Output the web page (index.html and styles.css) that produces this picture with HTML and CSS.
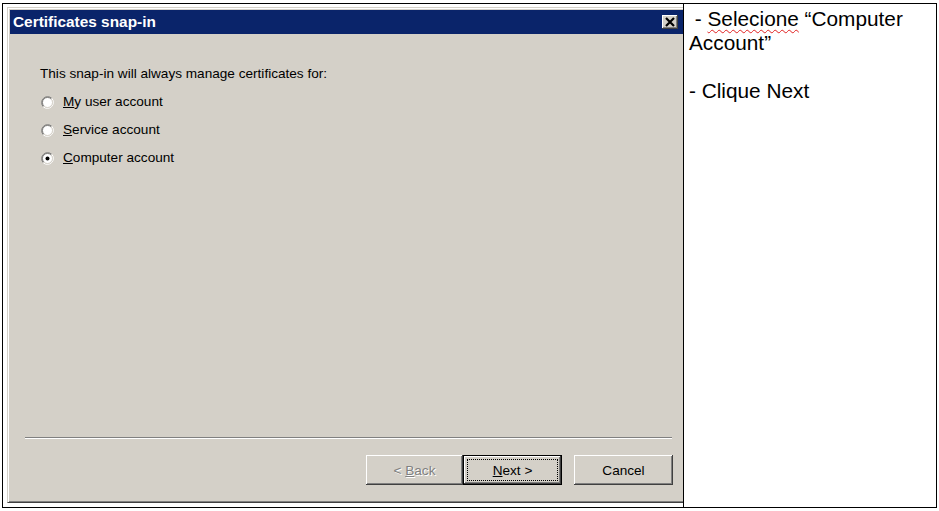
FILE: index.html
```html
<!DOCTYPE html>
<html lang="pt">
<head>
<meta charset="utf-8">
<title>Certificates snap-in</title>
<link rel="stylesheet" href="styles.css">
</head>
<body>
<div class="doc-table">
  <div class="cell cell-shot">
    <div class="dialog">
      <div class="titlebar">
        <span class="title">Certificates snap-in</span>
        <span class="close-btn">
          <svg width="16" height="14" viewBox="0 0 16 14"><path d="M4 3 L12 11 M12 3 L4 11" stroke="#000" stroke-width="2.2" fill="none"/></svg>
        </span>
      </div>
      <div class="body">
        <div class="prompt">This snap-in will always manage certificates for:</div>
        <div class="radio-row">
          <svg class="radio" width="13" height="13" viewBox="0 0 13 13"><circle cx="6.5" cy="6.5" r="5" fill="#fff"/><path d="M10.74 2.26 A6 6 0 0 0 2.26 10.74" stroke="#808080" fill="none"/><path d="M2.26 10.74 A6 6 0 0 0 10.74 2.26" stroke="#fff" fill="none"/><path d="M10.04 2.96 A5 5 0 0 0 2.96 10.04" stroke="#404040" fill="none" stroke-opacity=".55"/><path d="M2.96 10.04 A5 5 0 0 0 10.04 2.96" stroke="#d4d0c8" fill="none"/></svg>
          <span class="label"><u>M</u>y user account</span>
        </div>
        <div class="radio-row">
          <svg class="radio" width="13" height="13" viewBox="0 0 13 13"><circle cx="6.5" cy="6.5" r="5" fill="#fff"/><path d="M10.74 2.26 A6 6 0 0 0 2.26 10.74" stroke="#808080" fill="none"/><path d="M2.26 10.74 A6 6 0 0 0 10.74 2.26" stroke="#fff" fill="none"/><path d="M10.04 2.96 A5 5 0 0 0 2.96 10.04" stroke="#404040" fill="none" stroke-opacity=".55"/><path d="M2.96 10.04 A5 5 0 0 0 10.04 2.96" stroke="#d4d0c8" fill="none"/></svg>
          <span class="label"><u>S</u>ervice account</span>
        </div>
        <div class="radio-row">
          <svg class="radio" width="13" height="13" viewBox="0 0 13 13"><circle cx="6.5" cy="6.5" r="5" fill="#fff"/><path d="M10.74 2.26 A6 6 0 0 0 2.26 10.74" stroke="#808080" fill="none"/><path d="M2.26 10.74 A6 6 0 0 0 10.74 2.26" stroke="#fff" fill="none"/><path d="M10.04 2.96 A5 5 0 0 0 2.96 10.04" stroke="#404040" fill="none" stroke-opacity=".55"/><path d="M2.96 10.04 A5 5 0 0 0 10.04 2.96" stroke="#d4d0c8" fill="none"/><circle cx="6.5" cy="6.5" r="2" fill="#000"/></svg>
          <span class="label"><u>C</u>omputer account</span>
        </div>
      </div>
      <div class="separator"></div>
      <div class="buttons">
        <span class="btn btn-back"><span class="btn-text">&lt; <u>B</u>ack</span></span>
        <span class="btn btn-next"><span class="btn-text"><u>N</u>ext &gt;</span></span>
        <span class="btn btn-cancel"><span class="btn-text">Cancel</span></span>
      </div>
    </div>
  </div>
  <div class="cell cell-notes">
    <p class="note">&nbsp;- <span class="spell">Selecione</span> “Computer Account”</p>
    <p class="note note-gap">- Clique Next</p>
  </div>
</div>
</body>
</html>
```

FILE: styles.css
```css
html, body {
  margin: 0;
  padding: 0;
  background: #fff;
}

.doc-table {
  margin: 3px 0 0 2px;
  width: 935px;
  height: 505px;
  box-sizing: border-box;
  border: 1px solid #000;
  display: grid;
  grid-template-columns: 681px 1fr;
}

.cell-shot {
  border-right: 1px solid #000;
  padding: 3px 0 4px 4px;
  display: flex;
}

.dialog {
  flex: 1;
  display: flex;
  flex-direction: column;
  background: #d4d0c8;
  border-top: 1px solid #d4d0c8;
  border-left: 1px solid #d4d0c8;
  border-bottom: 1px solid #404040;
  box-shadow: inset 1px 1px #fff, inset 0 -1px #808080;
  padding: 2px 0 2px 2px;
  font-family: "Liberation Sans", Arial, sans-serif;
  font-size: 13.6px;
  color: #000;
}

.titlebar {
  height: 24px;
  flex: none;
  background: #0a246a;
  display: flex;
  align-items: center;
  justify-content: space-between;
  padding: 0 5px 0 3px;
}

.title {
  color: #fff;
  font-weight: bold;
  font-size: 15.4px;
}

.close-btn {
  width: 16px;
  height: 14px;
  background: #d4d0c8;
  box-shadow: inset -1px -1px #404040, inset 1px 1px #fff, inset -2px -2px #808080, inset 2px 2px #d4d0c8;
  display: flex;
}

.body {
  flex: 1;
  display: flex;
  flex-direction: column;
  gap: 12px;
  padding: 32px 0 0 30px;
}

.prompt {
  height: 16px;
  line-height: 16px;
}

.radio-row {
  height: 16px;
  display: flex;
  align-items: center;
  gap: 9px;
  padding-left: 1px;
}

.radio {
  flex: none;
}

.label {
  line-height: 16px;
}

.separator {
  flex: none;
  height: 0;
  border-top: 1px solid #808080;
  border-bottom: 1px solid #fff;
  margin: 0 11px 0 15px;
}

.buttons {
  flex: none;
  display: flex;
  justify-content: flex-end;
  padding: 16px 10px 15px 0;
}

.btn {
  position: relative;
  box-sizing: border-box;
  height: 30px;
  display: flex;
  align-items: center;
  justify-content: center;
  background: #d4d0c8;
  box-shadow: inset -1px -1px #404040, inset 1px 1px #fff, inset -2px -2px #808080, inset 2px 2px #d4d0c8;
}

.btn-text {
  white-space: pre;
}

.btn-back {
  width: 97px;
  color: #808080;
  text-shadow: 1px 1px #fff;
}

.btn-next {
  width: 99px;
  border: 1px solid #000;
}

.btn-next::after {
  content: "";
  position: absolute;
  inset: 3px;
  border: 1px dotted #000;
}

.btn-cancel {
  width: 99px;
  margin-left: 12px;
}

.cell-notes {
  padding: 3px 5px 0 5px;
  font-family: "Liberation Sans", Arial, sans-serif;
  font-size: 20.8px;
  line-height: 24px;
  color: #000;
}

.note {
  margin: 0;
}

.note-gap {
  margin-top: 24px;
}

.spell {
  text-decoration: underline wavy #e02020;
  text-decoration-thickness: 1px;
  text-underline-offset: 3px;
}
```
